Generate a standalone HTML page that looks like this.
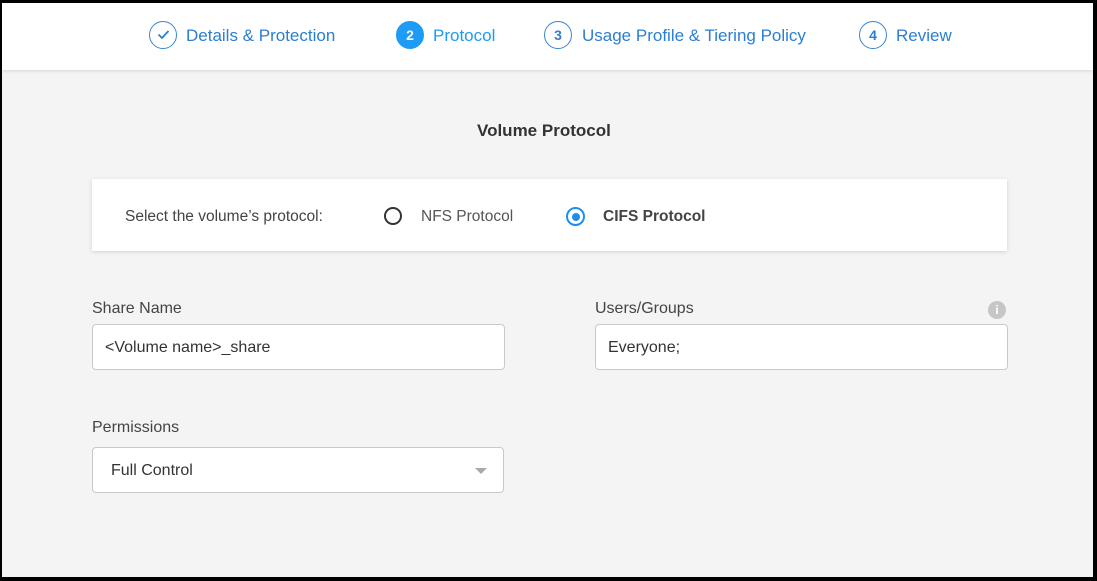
<!DOCTYPE html>
<html><head><style>
*{margin:0;padding:0;box-sizing:border-box}
body{width:1097px;height:581px;background:#000;position:relative;overflow:hidden;font-family:"Liberation Sans",sans-serif}
#page{position:absolute;left:2px;top:3px;width:1091px;height:574px;background:#f4f4f4}
#hdr{position:absolute;left:0;top:0;width:1091px;height:67px;background:#fff;box-shadow:0 1px 3px rgba(0,0,0,.12)}
.a{position:absolute;white-space:nowrap}
.step{font-size:17px;color:#2b7fd1;top:23px}
.circ{position:absolute;width:28px;height:28px;border:1.6px solid #3b86d4;border-radius:50%;top:18px;color:#2b7fd1;font-size:14px;font-weight:bold;text-align:center;line-height:26px}
.box{position:absolute;background:#fff;border:1px solid #c9c9c9;border-radius:4px;height:46px;font-size:16px;color:#333;line-height:46px;padding-left:12px}
.lbl{font-size:16px;color:#444}
</style></head><body>
<div id="page">
<div id="hdr">
 <div class="circ" style="left:147px"><svg width="25" height="25" viewBox="0 0 25 25"><path d="M7.5 12.5l3.5 3.5 6.5-7" fill="none" stroke="#2b7fd1" stroke-width="1.8"/></svg></div>
 <div class="a step" style="left:184px">Details &amp; Protection</div>
 <div class="circ" style="left:394px;background:#1d9bf6;border-color:#1d9bf6;color:#fff">2</div>
 <div class="a step" style="left:431px;color:#1d9bf6">Protocol</div>
 <div class="circ" style="left:542px">3</div>
 <div class="a step" style="left:580px">Usage Profile &amp; Tiering Policy</div>
 <div class="circ" style="left:857px">4</div>
 <div class="a step" style="left:894px">Review</div>
</div>
<div class="a" style="left:475px;top:118px;font-size:17px;color:#333;font-weight:bold">Volume Protocol</div>
<div class="a" style="left:90px;top:176px;width:915px;height:72px;background:#fff;box-shadow:0 1px 4px rgba(0,0,0,.15)">
 <div class="a lbl" style="left:33px;top:29px;font-size:15.5px">Select the volume’s protocol:</div>
 <div class="a" style="left:292px;top:28px;width:18px;height:18px;border:2px solid #333;border-radius:50%"></div>
 <div class="a lbl" style="left:329px;top:29px;font-size:15.5px;color:#555">NFS Protocol</div>
 <div class="a" style="left:474px;top:28px;width:19px;height:19px;border:2px solid #1d8ef0;border-radius:50%"><div style="margin:3.5px;width:8px;height:8px;border-radius:50%;background:#1d8ef0"></div></div>
 <div class="a lbl" style="left:511px;top:29px;font-size:15.5px;font-weight:bold;color:#444">CIFS Protocol</div>
</div>
<div class="a lbl" style="left:90px;top:297px">Share Name</div>
<div class="box" style="left:90px;top:321px;width:413px">&lt;Volume name&gt;_share</div>
<div class="a lbl" style="left:593px;top:297px">Users/Groups</div>
<div class="a" style="left:986px;top:298px;width:18px;height:18px;border-radius:50%;background:#c6c6c6;color:#fff;font-size:12px;font-weight:bold;text-align:center;line-height:18px">i</div>
<div class="box" style="left:593px;top:321px;width:413px">Everyone;</div>
<div class="a lbl" style="left:90px;top:416px">Permissions</div>
<div class="box" style="left:90px;top:444px;width:412px;padding-left:18px">Full Control
 <div class="a" style="right:16px;top:20px;width:0;height:0;border-left:6px solid transparent;border-right:6px solid transparent;border-top:6px solid #aaa"></div>
</div>
</div>
</body></html>
